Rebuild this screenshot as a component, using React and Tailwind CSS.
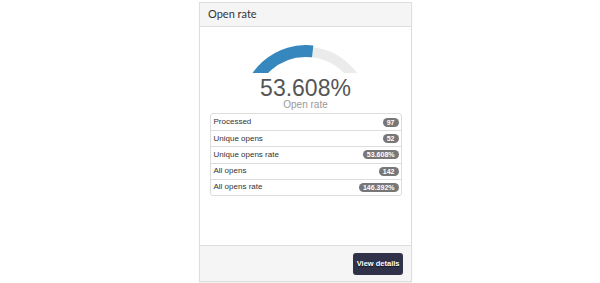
import React from "react";

// Stats shown under the gauge
const rows = [
  { label: "Processed", value: "97" },
  { label: "Unique opens", value: "52" },
  { label: "Unique opens rate", value: "53.608%" },
  { label: "All opens", value: "142" },
  { label: "All opens rate", value: "146.392%" },
];

function Gauge({ percent }) {
  // semicircle centred at (65,65), only the top part is visible
  const r = 59;
  const a = Math.PI - (percent / 100) * Math.PI;
  const x = 65 + r * Math.cos(a);
  const y = 65 - r * Math.sin(a);
  return (
    <svg width="130" height="28" viewBox="0 0 130 28" className="block">
      <path d="M 7 65 A 58 58 0 0 1 123 65" fill="none" stroke="#ebebeb" strokeWidth="10" />
      <path d={`M 6 65 A ${r} ${r} 0 0 1 ${x} ${y}`} fill="none" stroke="#3787bf" strokeWidth="12" />
    </svg>
  );
}

export default function App() {
  return (
    <div className="w-[600px] h-[283px] bg-white flex justify-center pt-[2px] font-['Liberation_Sans',Arial,sans-serif]">
      <div className="w-[213px] h-[280px] ml-[11px] border border-[#dddddd] shadow-[0_1px_1px_rgba(0,0,0,0.05)] flex flex-col bg-white">
        <div className="h-[24px] bg-[#f5f5f5] border-b border-[#dddddd] px-[8px] flex items-center font-['Lato',sans-serif] text-[11px] text-[#333]">
          Open rate
        </div>

        <div className="flex-1 flex flex-col items-center px-[9px]">
          <div className="mt-[18px]">
            <Gauge percent={53.608} />
          </div>
          <div className="text-[23px] leading-[23px] text-[#555] mt-[4px]">53.608%</div>
          <div className="text-[10px] leading-[10px] text-[#999]">Open rate</div>

          <div className="w-[192px] mt-[3px] border border-[#dddddd] rounded-[3px] flex flex-col">
            {rows.map((row, i) => (
              <div
                key={row.label}
                className={`h-[16.2px] flex items-center justify-between pl-[3px] pr-[2px] text-[8px] text-[#333] ${i > 0 ? "border-t border-[#dddddd]" : ""}`}
              >
                <span>{row.label}</span>
                <span className="bg-[#777] text-white font-bold text-[7px] leading-[9px] rounded-full px-[4px]">{row.value}</span>
              </div>
            ))}
          </div>
        </div>

        <div className="h-[36px] bg-[#f5f5f5] border-t border-[#dddddd] flex items-center justify-end pr-[8px]">
          <button className="h-[22px] px-[3.5px] bg-[#2f3248] rounded-[3px] text-white font-bold text-[7.5px] [text-shadow:0_1px_1px_rgba(0,0,0,0.6)]">
            View details
          </button>
        </div>
      </div>
    </div>
  );
}
